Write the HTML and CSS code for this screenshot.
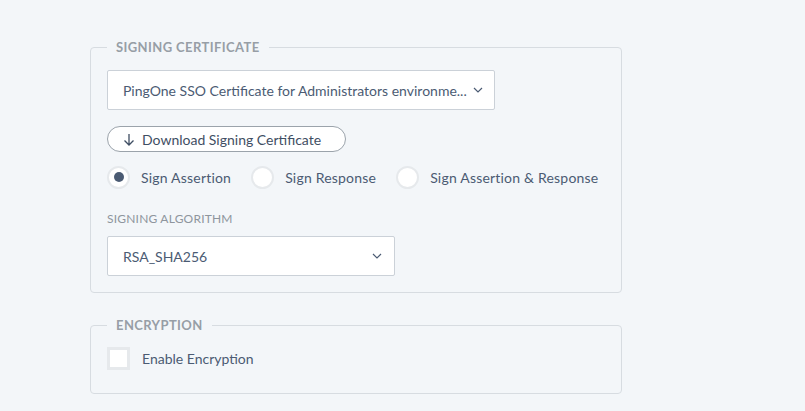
FILE: index.html
```html
<!DOCTYPE html>
<html>
<head>
<meta charset="utf-8">
<link rel="stylesheet" href="styles.css">
</head>
<body>
<div class="page">
  <fieldset class="group">
    <legend class="group-title">Signing Certificate</legend>
    <div class="select wide">
      <span class="select-text">PingOne SSO Certificate for Administrators environme...</span>
      <svg class="chev" width="10" height="6" viewBox="0 0 10 6"><path d="M1 1l4 4 4-4" fill="none" stroke="#4b5b73" stroke-width="1.2"/></svg>
    </div>
    <button class="pill-btn">
      <svg width="12" height="13" viewBox="0 0 12 13"><path d="M6 1v11M1.5 7.5L6 12l4.5-4.5" fill="none" stroke="#3f4e63" stroke-width="1.3"/></svg>
      <span>Download Signing Certificate</span>
    </button>
    <div class="radios">
      <label class="radio"><span class="dot checked"></span>Sign Assertion</label>
      <label class="radio"><span class="dot"></span>Sign Response</label>
      <label class="radio"><span class="dot"></span>Sign Assertion &amp; Response</label>
    </div>
    <div class="field-label">Signing Algorithm</div>
    <div class="select narrow">
      <span class="select-text">RSA_SHA256</span>
      <svg class="chev" width="10" height="6" viewBox="0 0 10 6"><path d="M1 1l4 4 4-4" fill="none" stroke="#4b5b73" stroke-width="1.2"/></svg>
    </div>
  </fieldset>
  <fieldset class="group enc">
    <legend class="group-title">Encryption</legend>
    <label class="check"><span class="box"></span>Enable Encryption</label>
  </fieldset>
</div>
</body>
</html>
```
FILE: styles.css
```css
html, body {
  margin: 0;
  padding: 0;
  background: #f3f6f9;
}
body {
  font-family: Lato, "Open Sans", "Liberation Sans", sans-serif;
  color: #4b5b73;
}
.page {
  padding: 39px 0 0 90px;
  width: 532px;
}
.group {
  margin: 0;
  border: 1px solid #d7dce1;
  border-radius: 4px;
  padding: 15px 16px 16px 16px;
  min-width: 0;
}
.group.enc {
  margin-top: 24px;
  padding-bottom: 23px;
  padding-top: 14px;
}
.group-title {
  padding: 0 9px 0 9px;
  margin-left: 0;
  font-size: 13px;
  line-height: 16px;
  font-weight: 700;
  text-transform: uppercase;
  color: #979ea6;
  letter-spacing: 0.4px;
}
.select {
  box-sizing: border-box;
  height: 40px;
  background: #fff;
  border: 1px solid #cbd1d8;
  border-radius: 2px;
  display: flex;
  align-items: center;
  padding: 0 11px 0 15px;
  font-size: 14px;
}
.select.wide { width: 388px; }
.select.narrow { width: 288px; padding-right: 12px; }
.select-text { white-space: nowrap; }
.chev { flex: none; margin-left: auto; }
.pill-btn {
  margin-top: 16px;
  box-sizing: border-box;
  height: 26px;
  width: 239px;
  border: 1px solid #9ba3ab;
  border-radius: 13px;
  background: #fff;
  display: flex;
  align-items: center;
  gap: 7px;
  padding: 0 0 0 15px;
  font-family: inherit;
  font-size: 14px;
  color: #3f4e63;
  white-space: nowrap;
}
.radios {
  margin-top: 13px;
  display: flex;
  align-items: center;
  height: 24px;
}
.radio {
  display: flex;
  align-items: center;
  flex: none;
  white-space: nowrap;
  font-size: 14px;
  letter-spacing: 0.2px;
  margin-right: 20px;
}
.dot {
  box-sizing: border-box;
  flex: none;
  width: 23px;
  height: 23px;
  border-radius: 50%;
  border: 2px solid #e6e9ec;
  background: #fff;
  margin-right: 11px;
  display: flex;
  align-items: center;
  justify-content: center;
}
.dot.checked::after {
  content: "";
  width: 10px;
  height: 10px;
  border-radius: 50%;
  background: #4b5b73;
}
.field-label {
  margin-top: 23px;
  font-size: 12px;
  line-height: 14px;
  text-transform: uppercase;
  color: #8e959d;
  letter-spacing: 0.2px;
  margin-bottom: 10px;
}
.check {
  display: flex;
  align-items: center;
  font-size: 14px;
}
.box {
  box-sizing: border-box;
  flex: none;
  width: 23px;
  height: 23px;
  border: 3px solid #e6e9ec;
  background: #fff;
  margin-right: 12px;
}
```
